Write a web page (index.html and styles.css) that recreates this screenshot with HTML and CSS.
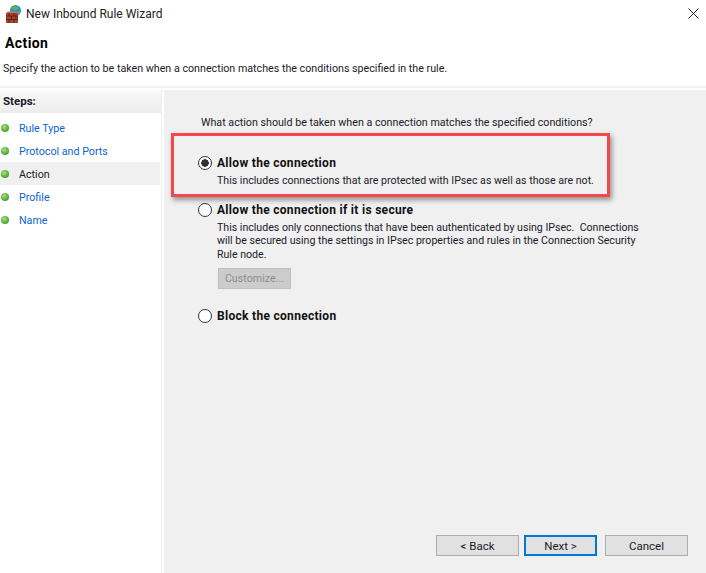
FILE: index.html
```html
<!DOCTYPE html>
<html lang="en">
<head>
<meta charset="utf-8">
<title>New Inbound Rule Wizard</title>
<link rel="stylesheet" href="styles.css">
</head>
<body>
<div class="window">
  <header class="titlebar">
    <svg class="app-icon" width="18" height="18" viewBox="0 0 18 18">
      <circle cx="9.500" cy="5.500" r="5.500" fill="#2f8fd8"/>
      <path d="M6 2c2-1.500 5-1.500 6 0 1 2-1 3-3 3S5 4 6 2z" fill="#62b24a"/>
      <path d="M11 7c1.500-.5 3-.5 3.500 0-.5 2-2 3-3.500 3z" fill="#62b24a"/>
      <rect x="0" y="8" width="12" height="10" fill="#a5432f"/>
      <path d="M2 6.500h10V8H0z" fill="#c8785c"/>
      <path d="M0 11h12M0 14.500h12M3 8v3M8 8v3M5.500 11v3.500M10 11v3.500M3 14.500V18M8 14.500V18" stroke="#5e2418" stroke-width="1" fill="none"/>
    </svg>
    <span class="window-title">New Inbound Rule Wizard</span>
    <svg class="close-icon" width="11" height="11" viewBox="0 0 11 11">
      <path d="M.5.500l10 10M10.500.500l-10 10" stroke="#222" stroke-width="1" fill="none"/>
    </svg>
  </header>
  <section class="page-head">
    <h1 class="page-title">Action</h1>
    <p class="page-desc">Specify the action to be taken when a connection matches the conditions specified in the rule.</p>
  </section>
  <div class="content">
    <nav class="steps">
      <div class="steps-head">Steps:</div>
      <ul class="steps-list">
        <li class="step"><span class="dot"></span><a class="step-link">Rule Type</a></li>
        <li class="step"><span class="dot"></span><a class="step-link">Protocol and Ports</a></li>
        <li class="step current"><span class="dot"></span><a class="step-link">Action</a></li>
        <li class="step"><span class="dot"></span><a class="step-link">Profile</a></li>
        <li class="step"><span class="dot"></span><a class="step-link">Name</a></li>
      </ul>
    </nav>
    <main class="main">
      <p class="question">What action should be taken when a connection matches the specified conditions?</p>
      <div class="option first">
        <span class="radio checked"></span>
        <div class="option-body">
          <div class="option-label">Allow the connection</div>
          <p class="option-text">This includes connections that are protected with IPsec as well as those are not.</p>
        </div>
      </div>
      <div class="option second">
        <span class="radio"></span>
        <div class="option-body">
          <div class="option-label">Allow the connection if it is secure</div>
          <p class="option-text">This includes only connections that have been authenticated by using IPsec.&nbsp; Connections<br>will be secured using the settings in IPsec properties and rules in the Connection Security<br>Rule node.</p>
          <button class="customize" disabled>Customize...</button>
        </div>
      </div>
      <div class="option third">
        <span class="radio"></span>
        <div class="option-body">
          <div class="option-label">Block the connection</div>
        </div>
      </div>
      <div class="buttons">
        <button class="btn back">&lt; Back</button>
        <button class="btn next">Next &gt;</button>
        <button class="btn cancel">Cancel</button>
      </div>
      <div class="highlight"></div>
    </main>
  </div>
</div>
</body>
</html>
```
FILE: styles.css
```css
* { box-sizing: border-box; }
html, body { margin: 0; padding: 0; }
body {
  width: 706px;
  height: 573px;
  overflow: hidden;
  background: #fff;
  font-family: Roboto, "Noto Sans", sans-serif;
  font-size: 10.7px;
  color: #1a1a2a;
}
.window { display: flex; flex-direction: column; height: 573px; }
.titlebar {
  display: flex;
  align-items: center;
  height: 27px;
  padding: 0 7px 0 6px;
}
.app-icon { flex: none; }
.window-title { margin-left: 2px; font-size: 12px; color: #222; }
.close-icon { margin-left: auto; margin-top: -1px; }
.page-head { height: 61px; border-bottom: 2px solid #f0f0f0; padding-left: 3px; }
.page-title { margin: 6px 0 0 2px; font-size: 14px; letter-spacing: .4px; font-weight: 700; line-height: 20px; color: #000; }
.page-desc { margin: 8px 0 0; line-height: 16px; }
.content { display: flex; flex: 1; min-height: 0; padding-top: 2px; }
.steps { width: 162px; border-right: 1px solid #f0f0f0; }
.steps-head {
  height: 23px;
  padding: 2px 3px;
  font-size: 11.5px;
  font-weight: 700;
  line-height: 18px;
  background: linear-gradient(#fafafa, #ececec);
}
.steps-list { list-style: none; margin: 0; padding: 3px 0 0; width: 160px; }
.step { display: flex; align-items: center; height: 23px; padding-left: 1px; }
.step.current { background: #f0f0f0; }
.dot {
  width: 8px;
  height: 8px;
  border-radius: 50%;
  background: radial-gradient(circle at 40% 35%, #a8e07c, #45a52c 70%);
}
.step-link { margin-left: 10px; padding-top: 2px; color: #0a66d4; }
.current .step-link { color: #1a1a2a; }
.main {
  position: relative;
  flex: 1;
  margin-left: 2px;
  background: #f0f0f0;
  padding: 25px 0 0 34px;
  display: flex;
  flex-direction: column;
}
.question { margin: 0 0 0 3px; line-height: 16px; }
.option { display: flex; align-items: flex-start; }
.option.first { margin-top: 24px; }
.option.second { margin-top: 14px; }
.option.third { margin-top: 19px; }
.radio {
  flex: none;
  width: 14px;
  height: 14px;
  margin-top: 1px;
  border: 1px solid #333;
  border-radius: 50%;
  background: #fff;
}
.radio.checked {
  background: radial-gradient(circle, #333 0 3.500px, #fff 4px);
}
.option-body { margin-left: 5px; }
.option-label { font-weight: 700; font-size: 12px; letter-spacing: .3px; line-height: 16px; color: #111; }
.option-text { margin: 3px 0 0; font-size: 10.6px; line-height: 13.500px; white-space: nowrap; }
.customize {
  display: block;
  width: 73px;
  height: 21px;
  margin: 7px 0 0 1px;
  padding: 0;
  background: #ccc;
  border: 1px solid #bfbfbf;
  color: #8f8f8f;
  font: inherit;
}
.buttons {
  display: flex;
  margin-top: auto;
  margin-bottom: 17px;
  margin-left: 238px;
}
.btn {
  width: 83px;
  height: 21px;
  padding: 0;
  background: #e1e1e1;
  border: 1px solid #adadad;
  font: inherit;
  font-size: 11.500px;
  color: #1a1a2a;
}
.next { width: 73px; margin-left: 5px; border: 2px solid #0078d7; }
.cancel { margin-left: 8px; }
.highlight {
  position: absolute;
  left: 7px;
  top: 43px;
  width: 439px;
  height: 64px;
  border: 3px solid #f4474b;
  box-shadow: 2px 3px 5px rgba(0, 0, 0, .4);
  pointer-events: none;
}
```
